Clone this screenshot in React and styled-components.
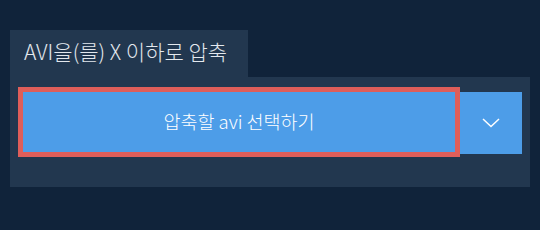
import React from 'react';
import styled, { createGlobalStyle } from 'styled-components';

const GlobalStyle = createGlobalStyle`
  html, body {
    margin: 0;
    padding: 0;
    background-color: #10233a;
  }

  body {
    font-family: "Noto Sans CJK KR", "Noto Sans", sans-serif;
  }
`;

const Container = styled.div`
  width: 540px;
  height: 230px;
  padding: 30px 10px 0;
  box-sizing: border-box;
`;

const Tab = styled.div`
  width: 238px;
  height: 47px;
  box-sizing: border-box;
  padding-left: 14px;
  display: flex;
  align-items: center;
  background-color: #22374f;
  color: #e3e8ee;
  font-size: 21px;
  font-weight: 300;
  line-height: 1;
  padding-bottom: 4px;
`;

const Panel = styled.div`
  width: 520px;
  height: 110px;
  box-sizing: border-box;
  padding: 10px 8px 0;
  background-color: #22374f;
`;

const Row = styled.div`
  display: flex;
  align-items: flex-start;
`;

const SelectButton = styled.button`
  width: 442px;
  height: 70px;
  box-sizing: border-box;
  border: 5px solid #df5e5a;
  background-color: #4d9de8;
  color: #ffffff;
  font-family: inherit;
  font-size: 18.5px;
  font-weight: 300;
  padding: 0 0 2px;
  cursor: pointer;
`;

const DropButton = styled.button`
  width: 62px;
  height: 62px;
  margin-top: 5px;
  border: none;
  padding: 0;
  background-color: #4d9de8;
  display: flex;
  align-items: center;
  justify-content: center;
  cursor: pointer;
`;

export default function App() {
  return (
    <Container>
      <GlobalStyle />
      <Tab>AVI을(를) X 이하로 압축</Tab>
      <Panel>
        <Row>
          <SelectButton>압축할 avi 선택하기</SelectButton>
          <DropButton>
            <svg width="18" height="10" viewBox="0 0 18 10">
              <path d="M1 1 L9 8.5 L17 1" fill="none" stroke="#ffffff" strokeWidth="1.5" />
            </svg>
          </DropButton>
        </Row>
      </Panel>
    </Container>
  );
}
